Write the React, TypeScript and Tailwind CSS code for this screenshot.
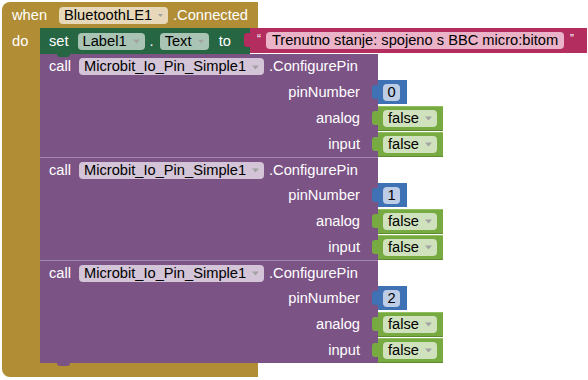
import React from "react";

function Arrow() {
  return (
    <svg width="7" height="5" viewBox="0 0 7 5" className="ml-[6px] mt-[1px]">
      <path d="M0 0.5h7L3.5 4.5z" fill="#a3a3a3" />
    </svg>
  );
}

function Field({ text, bg, arrow = true, w }: { text: string; bg: string; arrow?: boolean; w?: string }) {
  return (
    <span className={`inline-flex items-center justify-center h-[17px] rounded-[4px] px-[5px] text-black ${bg} ${w ?? ""}`}>
      <span>{text}</span>
      {arrow && <Arrow />}
    </span>
  );
}

function Row({ label, children, bump }: { label: string; children: React.ReactNode; bump?: boolean }) {
  return (
    <div className="flex items-center h-[26px]">
      <div className="relative w-[338px] h-full bg-[#7c5385] flex items-center justify-end pr-[18px] text-white">
        {label}
        {bump && <span className="absolute left-[17px] top-full w-[13px] h-[3px] bg-[#7c5385] rounded-b-[4px]" />}
      </div>
      {children}
    </div>
  );
}

function NumBlock({ n }: { n: string }) {
  return (
    <div className="flex items-center">
      <div className="relative -ml-[6px] w-[6px] h-[14px] bg-[#3f71b5] rounded-l-[3px]" />
      <div className="w-[29px] h-[24px] bg-[#3f71b5] flex items-center pl-[5px]">
        <span className="inline-flex items-center justify-center w-[17px] h-[17px] rounded-[4px] bg-[#bccde5] text-black">{n}</span>
      </div>
    </div>
  );
}

function BoolBlock() {
  return (
    <div className="flex items-center">
      <div className="relative -ml-[6px] w-[6px] h-[14px] bg-[#77ab41] rounded-l-[3px]" />
      <div className="w-[65px] h-[25px] bg-[#77ab41] border-t border-t-[#92c060] border-b border-b-[#5e8a32] flex items-center pl-[5px]">
        <Field text="false" bg="bg-[#cfe2bd]" w="w-[54px]" />
      </div>
    </div>
  );
}

function CallBlock({ pin, first, last }: { pin: string; first?: boolean; last?: boolean }) {
  return (
    <div className="flex flex-col">
      <div
        className={`w-[338px] h-[25px] bg-[#7c5385] flex items-center pl-[9px] text-white ${first ? "" : "border-t border-t-[#a386ab]"}`}
      >
        <span>call</span>
        <span className="ml-[8px]">
          <Field text="Microbit_Io_Pin_Simple1" bg="bg-[#d3c4d7]" w="w-[185px]" />
        </span>
        <span className="ml-[5px]">.ConfigurePin</span>
      </div>
      <Row label="pinNumber">
        <NumBlock n={pin} />
      </Row>
      <Row label="analog">
        <BoolBlock />
      </Row>
      <Row label="input" bump={last}>
        <BoolBlock />
      </Row>
    </div>
  );
}

export default function App() {
  return (
    <div className="w-[588px] h-[380px] bg-white overflow-hidden font-['Liberation_Sans',Arial,sans-serif] text-[14.67px] leading-none">
      <div className="pt-[2px] pl-[2px] flex flex-col">
        <div className="w-[256px] h-[26px] bg-[#b18e35] rounded-tl-[8px] flex items-center pl-[10px] text-white">
          <span>when</span>
          <span className="ml-[12px]">
            <Field text="BluetoothLE1" bg="bg-[#e6d8b8]" w="w-[109px]" />
          </span>
          <span className="ml-[5px]">.Connected</span>
        </div>
        <div className="flex">
          <div className="w-[38px] bg-[#b18e35] text-white">
            <div className="h-[26px] flex items-center pl-[10px]">do</div>
          </div>
          <div className="flex flex-col">
            <div className="relative z-10 flex items-start">
              <div className="relative w-[210px] h-[26px] bg-[#266643] flex items-center pl-[9px] text-white">
                <span>set</span>
                <span className="ml-[9px]">
                  <Field text="Label1" bg="bg-[#a9c4b4]" w="w-[67px]" />
                </span>
                <span className="ml-[5px]">.</span>
                <span className="ml-[6px]">
                  <Field text="Text" bg="bg-[#a9c4b4]" w="w-[49px]" />
                </span>
                <span className="ml-[10px]">to</span>
                <span className="absolute left-[17px] top-full w-[13px] h-[3px] bg-[#266643] rounded-b-[4px]" />
              </div>
              <div className="relative -ml-[6px] mt-[5px] w-[6px] h-[14px] bg-[#b32d5e] rounded-l-[3px]" />
              <div className="w-[337px] h-[25px] bg-[#b32d5e] flex items-center text-white">
                <span className="ml-[7px] self-start mt-[5px] text-[12px]">“</span>
                <span className="ml-[5px]">
                  <Field text="Trenutno stanje: spojeno s BBC micro:bitom" bg="bg-[#eab3c7]" arrow={false} w="w-[298px]" />
                </span>
                <span className="ml-[6px] self-start mt-[5px] text-[12px]">”</span>
              </div>
            </div>
            <CallBlock pin="0" first />
            <CallBlock pin="1" />
            <CallBlock pin="2" last />
          </div>
        </div>
        <div className="w-[256px] h-[14px] bg-[#b18e35] rounded-bl-[8px]" />
      </div>
    </div>
  );
}
